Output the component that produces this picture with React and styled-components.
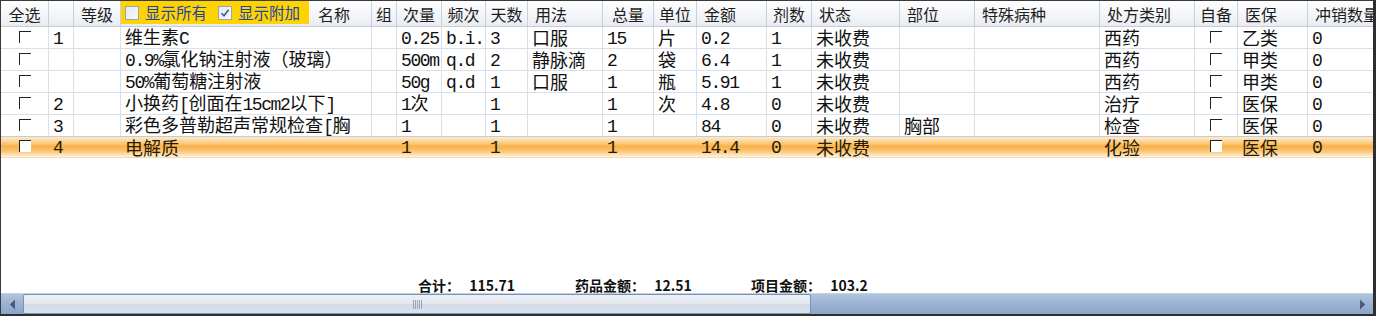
import React from 'react';
import styled, { createGlobalStyle } from 'styled-components';

const GlobalStyle = createGlobalStyle`
  html, body {
    margin: 0;
    padding: 0;
    background: #fff;
  }
  * {
    box-sizing: border-box;
  }
`;

const columns = [
  { key: 'chk', title: '全选', width: 48, align: 'center' },
  { key: 'seq', title: '', width: 25 },
  { key: 'level', title: '等级', width: 47, align: 'center' },
  { key: 'name', title: '名称', width: 251 },
  { key: 'group', title: '组', width: 25, align: 'center' },
  { key: 'dose', title: '次量', width: 45, align: 'center' },
  { key: 'freq', title: '频次', width: 44, align: 'center' },
  { key: 'days', title: '天数', width: 42, align: 'center' },
  { key: 'usage', title: '用法', width: 75 },
  { key: 'total', title: '总量', width: 51, align: 'center' },
  { key: 'unit', title: '单位', width: 43, align: 'center' },
  { key: 'amount', title: '金额', width: 70 },
  { key: 'packs', title: '剂数', width: 45, align: 'center' },
  { key: 'status', title: '状态', width: 88 },
  { key: 'site', title: '部位', width: 75 },
  { key: 'disease', title: '特殊病种', width: 125 },
  { key: 'type', title: '处方类别', width: 95 },
  { key: 'own', title: '自备', width: 43, align: 'center' },
  { key: 'insurance', title: '医保', width: 70 },
  { key: 'offset', title: '冲销数量', width: 90 },
];

const gridTemplate = columns.map(c => `${c.width}px`).join(' ');

const rows = [
  { seq: '1', name: '维生素C', dose: '0.25', freq: 'b.i.', days: '3', usage: '口服', total: '15', unit: '片', amount: '0.2', packs: '1', status: '未收费', site: '', type: '西药', insurance: '乙类', offset: '0' },
  { seq: '', name: '0.9%氯化钠注射液（玻璃）', dose: '500m', freq: 'q.d', days: '2', usage: '静脉滴', total: '2', unit: '袋', amount: '6.4', packs: '1', status: '未收费', site: '', type: '西药', insurance: '甲类', offset: '0' },
  { seq: '', name: '50%葡萄糖注射液', dose: '50g', freq: 'q.d', days: '1', usage: '口服', total: '1', unit: '瓶', amount: '5.91', packs: '1', status: '未收费', site: '', type: '西药', insurance: '甲类', offset: '0' },
  { seq: '2', name: '小换药[创面在15cm2以下]', dose: '1次', freq: '', days: '1', usage: '', total: '1', unit: '次', amount: '4.8', packs: '0', status: '未收费', site: '', type: '治疗', insurance: '医保', offset: '0' },
  { seq: '3', name: '彩色多普勒超声常规检查[胸', dose: '1', freq: '', days: '1', usage: '', total: '1', unit: '', amount: '84', packs: '0', status: '未收费', site: '胸部', type: '检查', insurance: '医保', offset: '0' },
  { seq: '4', name: '电解质', dose: '1', freq: '', days: '1', usage: '', total: '1', unit: '', amount: '14.4', packs: '0', status: '未收费', site: '', type: '化验', insurance: '医保', offset: '0', selected: true },
];

const Frame = styled.div`
  width: 1376px;
  height: 316px;
  display: flex;
  flex-direction: column;
  border-top: 1px solid #3a3a3a;
  border-left: 1px solid #3a3a3a;
  border-right: 3px solid #2e2e2e;
  border-bottom: 2px solid #2e2e2e;
  overflow: hidden;
  background: #fff;
  font-family: "Noto Sans CJK SC", sans-serif;
`;

const HeaderRow = styled.div`
  display: grid;
  grid-template-columns: ${gridTemplate};
  height: 26px;
  flex: none;
  background: linear-gradient(to bottom, #fdfdfe 0%, #f3f5f8 60%, #e8ecf1 100%);
  border-bottom: 1px solid #c3ccd8;
`;

const HeaderCell = styled.div`
  display: flex;
  align-items: center;
  justify-content: ${p => (p.$align === 'center' ? 'center' : 'flex-start')};
  padding-left: ${p => (p.$align === 'center' ? '0' : '7px')};
  border-right: 1px solid #c8d1dc;
  font-size: 16px;
  line-height: 20px;
  color: #1e1e1e;
  white-space: nowrap;
  overflow: hidden;
`;

const NameHeaderCell = styled(HeaderCell)`
  align-items: flex-start;
  padding-left: 0;
`;

const NameTitle = styled.span`
  align-self: center;
  margin-left: 9px;
`;

const FilterPanel = styled.div`
  width: 188px;
  height: 23px;
  background: #fdd300;
  display: flex;
  align-items: center;
  gap: 6px;
  padding-left: 4px;
`;

const FilterOption = styled.label`
  display: flex;
  align-items: center;
  gap: 6px;
  margin-right: 5px;
  color: #2443a8;
  font-size: 15.5px;
  line-height: 1;
`;

const FilterBox = styled.span`
  width: 14px;
  height: 14px;
  border: 1px solid #9ba6b3;
  background: linear-gradient(135deg, #e4e8ee 0%, #f8f9fb 100%);
  display: flex;
  align-items: center;
  justify-content: center;
`;

const Row = styled.div`
  display: grid;
  grid-template-columns: ${gridTemplate};
  height: 22px;
  flex: none;
  border-bottom: 1px solid ${p => (p.$selected ? '#f3dcb4' : '#d9e0ea')};
  border-top: ${p => (p.$selected ? '1px solid #c7ccd4' : 'none')};
  margin-top: ${p => (p.$selected ? '-1px' : '0')};
  background: ${p =>
    p.$selected
      ? 'linear-gradient(to bottom, #fdebcb 0%, #fcd494 22%, #f9b24a 48%, #fbc574 70%, #fde7c3 92%, #fff3de 100%)'
      : '#fff'};
`;

const Cell = styled.div`
  display: flex;
  align-items: center;
  justify-content: ${p => (p.$align === 'center' ? 'center' : 'flex-start')};
  padding-left: ${p => (p.$align === 'center' ? '0' : '4px')};
  border-right: 1px solid ${p => (p.$selected ? 'transparent' : '#d9e0ea')};
  font-size: 18px;
  line-height: 21px;
  color: ${p => (p.$selected ? '#2a1a00' : '#111')};
  white-space: nowrap;
  overflow: hidden;
`;

const CellText = styled.span`
  display: inline-block;
`;

const Latin = styled.span`
  font-family: "Liberation Mono", monospace;
  font-size: 18px;
  letter-spacing: -1.4px;
`;

const CellCheck = styled.span`
  width: 12px;
  height: 12px;
  margin-bottom: 2px;
  border-top: 1px solid #222;
  border-left: 1px solid #222;
  background: ${p => (p.$filled ? '#fff' : 'transparent')};
`;

const Filler = styled.div`
  flex: 1;
`;

const Summary = styled.div`
  display: grid;
  grid-template-columns: 157px 176px auto;
  padding-left: 417px;
  height: 16px;
  flex: none;
  font-size: 14px;
  font-weight: bold;
  line-height: 16px;
  color: #111;
  white-space: nowrap;
`;

const SummaryItem = styled.span`
  word-spacing: 6px;
`;

const ScrollBar = styled.div`
  display: flex;
  height: 21px;
  flex: none;
  background: linear-gradient(to bottom, #b2c4dd 0%, #9db4d4 45%, #8ba5c9 100%);
  border-top: 1px solid #c4d1e2;
`;

const ScrollButton = styled.div`
  width: 22px;
  flex: none;
  display: flex;
  align-items: center;
  justify-content: center;
`;

const ScrollThumb = styled.div`
  width: 788px;
  flex: none;
  border: 1px solid #7a92b6;
  border-radius: 2px;
  background: linear-gradient(to bottom, #eef1f6 0%, #e3e8ef 48%, #d2dbe7 52%, #dbe2ec 100%);
  display: flex;
  align-items: center;
  justify-content: center;
`;

const Grip = styled.span`
  width: 9px;
  height: 9px;
  background: repeating-linear-gradient(to right, #9aa6b6 0 1px, transparent 1px 2px);
`;

const ScrollTrack = styled.div`
  flex: 1;
`;

// half-width runs get a narrow monospace, like the old grid font
const splitRuns = text =>
  text
    .split(/([\x20-\x7e]+)/)
    .filter(Boolean)
    .map((part, i) =>
      /^[\x20-\x7e]+$/.test(part) ? <Latin key={i}>{part}</Latin> : part
    );

const renderCell = (col, row) => {
  if (col.key === 'chk' || col.key === 'own') {
    return <CellCheck $filled={row.selected} />;
  }
  const value = row[col.key] || '';
  return value ? <CellText>{splitRuns(value)}</CellText> : null;
};

const App = () => (
  <>
    <GlobalStyle />
    <Frame>
      <HeaderRow>
        {columns.map(col =>
          col.key === 'name' ? (
            <NameHeaderCell key={col.key}>
              <FilterPanel>
                <FilterOption>
                  <FilterBox />
                  显示所有
                </FilterOption>
                <FilterOption>
                  <FilterBox>
                    <svg width="10" height="10" viewBox="0 0 10 10">
                      <path d="M1.5 5.2 L4 7.8 L8.6 1.8" fill="none" stroke="#3d5c92" strokeWidth="1.6" />
                    </svg>
                  </FilterBox>
                  显示附加
                </FilterOption>
              </FilterPanel>
              <NameTitle>{col.title}</NameTitle>
            </NameHeaderCell>
          ) : (
            <HeaderCell key={col.key} $align={col.align}>
              {col.title}
            </HeaderCell>
          )
        )}
      </HeaderRow>
      {rows.map((row, i) => (
        <Row key={i} $selected={row.selected}>
          {columns.map(col => (
            <Cell
              key={col.key}
              $align={col.key === 'chk' || col.key === 'own' ? 'center' : 'left'}
              $selected={row.selected}
            >
              {renderCell(col, row)}
            </Cell>
          ))}
        </Row>
      ))}
      <Filler />
      <Summary>
        <SummaryItem>合计： 115.71</SummaryItem>
        <SummaryItem>药品金额： 12.51</SummaryItem>
        <SummaryItem>项目金额： 103.2</SummaryItem>
      </Summary>
      <ScrollBar>
        <ScrollButton>
          <svg width="7" height="11" viewBox="0 0 7 11">
            <path d="M6 0.5 L0.8 5.5 L6 10.5 Z" fill="#4b5b7a" />
          </svg>
        </ScrollButton>
        <ScrollThumb>
          <Grip />
        </ScrollThumb>
        <ScrollTrack />
        <ScrollButton>
          <svg width="7" height="11" viewBox="0 0 7 11">
            <path d="M1 0.5 L6.2 5.5 L1 10.5 Z" fill="#4b5b7a" />
          </svg>
        </ScrollButton>
      </ScrollBar>
    </Frame>
  </>
);

export default App;
